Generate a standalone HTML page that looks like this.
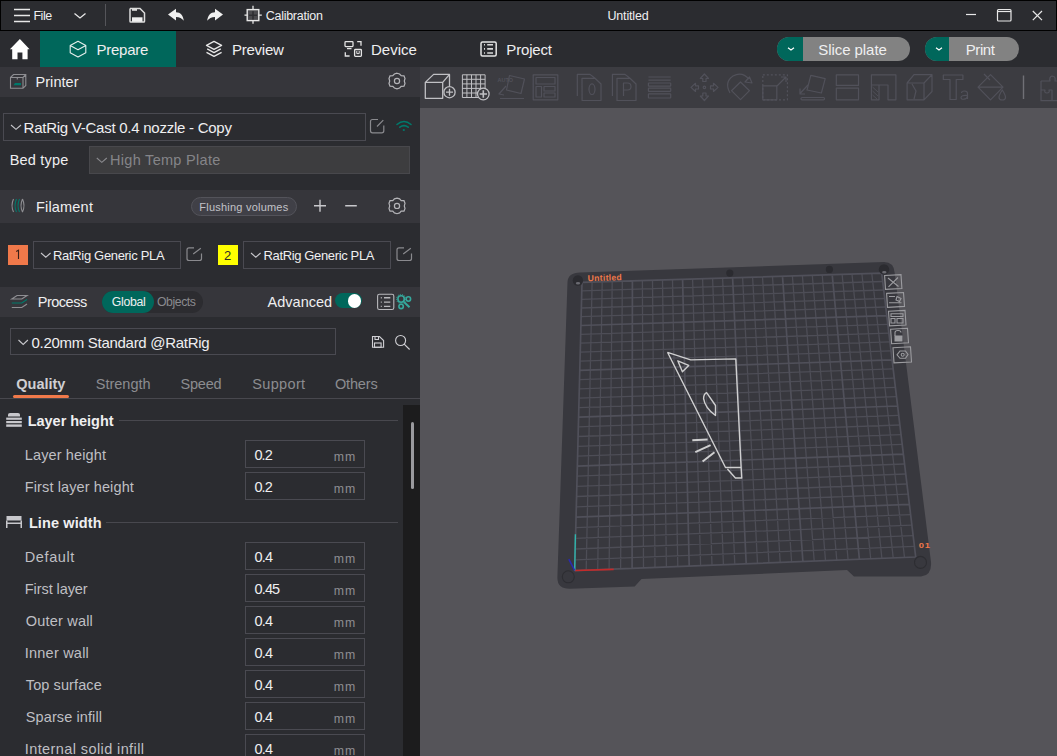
<!DOCTYPE html>
<html><head><meta charset="utf-8">
<style>
*{box-sizing:border-box;margin:0;padding:0}
html,body{width:1057px;height:756px;overflow:hidden;background:#2b2c30;font-family:"Liberation Sans",sans-serif;color:#efeff0}
.a{position:absolute}
.t{position:absolute;white-space:nowrap;line-height:1}
svg{position:absolute;overflow:visible}
</style></head><body>
<!-- title bar -->
<div class="a" style="left:0;top:0;width:1057px;height:31px;background:#2b2c30;border-top:1px solid #000;border-left:1px solid #000;border-right:1px solid #000;border-bottom:1px solid #000"></div>
<svg style="left:0;top:0" width="1057" height="31">
 <g stroke="#e8e8e8" stroke-width="1.6" fill="none">
  <path d="M14 9.5H30M14 15.5H30M14 21.5H30"/>
  <path d="M74.5 13.5L80 18L85.5 13.5" stroke-width="1.3"/>
 </g>
 <path d="M105.5 4V26" stroke="#55555a" stroke-width="1"/>
</svg>
<svg style="left:0;top:0;z-index:1" width="1057" height="67">
 <g fill="none" stroke="#dcdcdc" stroke-width="1.5">
  <path d="M130 8.5H140L144.5 13V21.2Q144.5 22 143.7 22H130.8Q130 22 130 21.2V9.3Q130 8.5 130.8 8.5Z"/>
 </g>
 <rect x="132" y="8" width="5" height="2.8" fill="#dcdcdc"/>
 <rect x="132" y="17.3" width="10.5" height="4.5" fill="#f0f0f0"/>
 <path d="M168 14.6L176 8.8V12.2C180.5 12.2 183.2 15.5 183.8 20.8C182 18.3 179.5 17 176 17V20.4Z" fill="#f0f0f0"/>
 <path d="M223 14.6L215 8.8V12.2C210.5 12.2 207.8 15.5 207.2 20.8C209 18.3 211.5 17 215 17V20.4Z" fill="#f0f0f0"/>
 <rect x="247.2" y="9.6" width="11.6" height="11" fill="#4a4a4e" stroke="#e6e6e6" stroke-width="1.4"/>
 <path d="M249 15.2H257M253 11.2V19.5" stroke="#2e2e32" stroke-width="1.6"/>
 <path d="M244.5 15.2H247.5M258.5 15.2H261.8M253 5.8V9.6M253 20.6V23.8" stroke="#e6e6e6" stroke-width="1.3"/>
 <path d="M19.9 39L9.9 49.2H12.2V59.2H17.5V52.5H22.4V59.2H27.6V49.2H29.6Z" fill="#fff"/>
 <g fill="none" stroke="#e6efed" stroke-width="1.1" stroke-linejoin="round">
  <path d="M78 41.2L70.2 45.5V52.8L78 57L85.8 52.8V45.5Z M70.2 45.5L78 49.7L85.8 45.5"/>
 </g>
 <g fill="none" stroke="#e8e8e8" stroke-width="1.3" stroke-linejoin="round">
  <path d="M214 41.4L206.5 45.4L214 49.3L221.6 45.4Z"/>
  <path d="M207.2 48.9L214 52.6L220.8 48.9"/>
  <path d="M206.5 52.4L214 56.4L221.6 52.4"/>
 </g>
 <g fill="none" stroke="#e4e4e4" stroke-width="1.3">
  <rect x="345" y="41.6" width="8" height="5" rx="0.8"/>
  <path d="M347 48.6H351.5"/>
  <path d="M357.2 41.7H361V45.8"/>
  <path d="M345.3 52.3V56H349.6"/>
  <rect x="354.6" y="49.5" width="6.8" height="6.8" rx="0.8"/>
  <path d="M356.8 51V53.6H359.2V51" stroke-width="1"/>
 </g>
 <g fill="none" stroke="#e4e4e4" stroke-width="1.5">
  <rect x="481" y="41.9" width="15.2" height="14.2" rx="1.5"/>
 </g>
 <path d="M484 44.7H485M487.2 44.7H493M484 48.9H485M487.2 48.9H493M484 53H485M487.2 53H493" stroke="#d8d8d8" stroke-width="1.6"/>
 <g fill="none" stroke="#fff" stroke-width="1.2">
  <path d="M788 47.8L791 50L794 47.8M936 47.8L939 50L942 47.8"/>
 </g>
 <g fill="none" stroke="#e8e8e8" stroke-width="1.2">
  <path d="M966 14.5H976"/>
  <rect x="997.5" y="9.5" width="13.5" height="11.5" rx="1"/>
  <path d="M997.5 11.5H1011"/>
  <path d="M1032.8 11L1042 20.2M1042 11L1032.8 20.2"/>
 </g>
</svg>
<!-- tab bar -->
<div class="a" style="left:0;top:31px;width:1057px;height:36px;background:#2b2c30"></div>
<div class="a" style="left:40px;top:31px;width:136px;height:36px;background:#00675b"></div>
<div class="a" style="left:777px;top:37px;width:133px;height:24px;border-radius:12px;background:#828282;overflow:hidden"><div class="a" style="left:0;top:0;width:26px;height:24px;background:#00675b"></div></div>
<div class="a" style="left:925px;top:37px;width:94px;height:24px;border-radius:12px;background:#828282;overflow:hidden"><div class="a" style="left:0;top:0;width:24px;height:24px;background:#00675b"></div></div>

<!-- left panel -->
<div class="a" style="left:0;top:67px;width:420px;height:30px;background:#36363b"></div>
<div class="a" style="left:3px;top:113px;width:363px;height:28px;border:1px solid #4a4a51"></div>
<div class="a" style="left:89px;top:146px;width:321px;height:28px;background:#3d3d3f;border:1px solid #48484c"></div>

<div class="a" style="left:0;top:190px;width:420px;height:33px;background:#36363b"></div>
<div class="a" style="left:191px;top:197px;width:106px;height:19px;border-radius:10px;background:#404047;border:1px solid #53535a"></div>

<div class="a" style="left:8px;top:245px;width:20px;height:20px;background:#f0794a"></div>
<div class="a" style="left:33px;top:241px;width:148px;height:28px;border:1px solid #4a4a51"></div>
<div class="a" style="left:218px;top:245px;width:20px;height:20px;background:#ffff00"></div>
<div class="a" style="left:243px;top:241px;width:148px;height:28px;border:1px solid #4a4a51"></div>

<div class="a" style="left:0;top:287px;width:420px;height:30px;background:#36363b"></div>
<div class="a" style="left:102px;top:291px;width:101px;height:22px;border-radius:11px;background:#2c2c30"></div>
<div class="a" style="left:102px;top:291px;width:52px;height:22px;border-radius:11px;background:#00675b"></div>
<div class="a" style="left:335px;top:293px;width:27px;height:15px;border-radius:8px;background:#00675b"></div>
<div class="a" style="left:347.5px;top:294px;width:13.5px;height:13.5px;border-radius:7px;background:#fff"></div>

<div class="a" style="left:10px;top:328px;width:326px;height:27px;border:1px solid #4a4a51"></div>
<div class="a" style="left:13px;top:395px;width:56px;height:3px;border-radius:1.5px;background:#f0794a"></div>
<div class="a" style="left:0;top:398px;width:420px;height:1px;background:#48484e"></div>

<div class="a" style="left:403px;top:405px;width:17px;height:351px;background:#1c1c1d"></div>
<div class="a" style="left:410.5px;top:422px;width:3px;height:67px;border-radius:1.5px;background:#9a9a9e"></div>
<div class="a" style="left:119px;top:420px;width:279px;height:1px;background:#48484e"></div>
<div class="a" style="left:106px;top:522px;width:292px;height:1px;background:#48484e"></div>
<div class="a" style="left:245px;top:440px;width:120px;height:28px;border:1px solid #4a4a51"></div>
<div class="a" style="left:245px;top:472px;width:120px;height:28px;border:1px solid #4a4a51"></div>
<div class="a" style="left:245px;top:542px;width:120px;height:28px;border:1px solid #4a4a51"></div>
<div class="a" style="left:245px;top:574px;width:120px;height:28px;border:1px solid #4a4a51"></div>
<div class="a" style="left:245px;top:606px;width:120px;height:28px;border:1px solid #4a4a51"></div>
<div class="a" style="left:245px;top:638px;width:120px;height:28px;border:1px solid #4a4a51"></div>
<div class="a" style="left:245px;top:670px;width:120px;height:28px;border:1px solid #4a4a51"></div>
<div class="a" style="left:245px;top:702px;width:120px;height:28px;border:1px solid #4a4a51"></div>
<div class="a" style="left:245px;top:734px;width:120px;height:28px;border:1px solid #4a4a51"></div>

<svg style="left:0;top:0" width="420" height="756">
 <!-- printer icon -->
 <g fill="none" stroke="#8e8e92" stroke-width="1.1">
  <path d="M10.5 77.5L13.5 74.5H25.8V85.5L23 88.3H10.5Z M10.5 77.5H23V88.3 M23 77.5L25.8 74.5"/>
  <path d="M17.3 77.5V79.5"/>
 </g>
 <path d="M13.5 85.2L15 83H21V85.2Z" fill="#00796b"/>
 <!-- gears -->
 <g fill="none" stroke="#b4b4b8" stroke-width="1.2">
  <path id="gear" d="M397 73.2L399.6 74L401.2 75.7L404 75.8L405 78.5L404.3 81L405 83.5L404 86.2L401.2 86.3L399.6 88L397 88.8L394.4 88L392.8 86.3L390 86.2L389 83.5L389.7 81L389 78.5L390 75.8L392.8 75.7L394.4 74Z"/>
  <circle cx="397" cy="81" r="2.6"/>
  <use href="#gear" y="124.9"/>
  <circle cx="397" cy="205.9" r="2.6"/>
 </g>
 <!-- combo chevrons -->
 <g fill="none" stroke="#c8c8cc" stroke-width="1.1">
  <path d="M11 125L16 129.3L21 125"/>
  <path d="M96.8 158L101.8 162.3L106.8 158" stroke="#8a8a8e"/>
  <path d="M41 253L45.8 257.2L50.6 253"/>
  <path d="M251 253L255.8 257.2L260.6 253"/>
  <path d="M18.5 340L23.2 344.4L27.9 340"/>
 </g>
 <!-- edit icons -->
 <g fill="none" stroke="#8a8a8e" stroke-width="1.2">
  <path d="M378 119.5H372.5Q370.5 119.5 370.5 121.5V130.8Q370.5 132.8 372.5 132.8H381.8Q383.8 132.8 383.8 130.8V125.5M377 126.5L383.3 120.2"/>
  <path d="M194 247.8H189Q187 247.8 187 249.8V258.5Q187 260.5 189 260.5H199.5Q201.5 260.5 201.5 258.5V253.5M193.2 254L200.8 248.3"/>
  <path d="M404 247.8H399Q397 247.8 397 249.8V258.5Q397 260.5 399 260.5H409.5Q411.5 260.5 411.5 258.5V253.5M403.2 254L410.8 248.3"/>
 </g>
 <!-- wifi -->
 <g fill="none" stroke="#00796b" stroke-width="1.6" stroke-linecap="round">
  <path d="M397 124.5Q404 118.5 411 124.5"/>
  <path d="M399.8 127.2Q404 124 408.2 127.2"/>
 </g>
 <circle cx="403.8" cy="130" r="1.1" fill="#00796b"/>
 <!-- filament icon -->
 <g fill="none" stroke-width="1.1">
  <path d="M13.5 199Q10.5 205.5 13.5 212" stroke="#8e8e92"/>
  <path d="M16.5 199Q13.5 205.5 16.5 212" stroke="#00796b"/>
  <path d="M19.5 199Q16.5 205.5 19.5 212" stroke="#00796b"/>
  <path d="M22.5 199Q19.5 205.5 22.5 212M22.5 199Q25.5 205.5 22.5 212" stroke="#8e8e92"/>
 </g>
 <path d="M16.2 251.5L18.5 250.2V259" fill="none" stroke="#3a2018" stroke-width="1.1"/>
 <!-- plus minus -->
 <path d="M314 205.8H326M320 199.8V211.8M345.2 205.8H356.8" stroke="#c8c8cc" stroke-width="1.4"/>
 <!-- process icon -->
 <g fill="none" stroke-width="1.2">
  <path d="M11.8 299L17 295.5H27L21.8 299Z" stroke="#8e8e92"/>
  <path d="M11.8 303H21.8L27 299.5" stroke="#00796b"/>
  <path d="M11.8 307.5H21.8L27 304" stroke="#8e8e92"/>
 </g>
 <!-- list icon -->
 <g fill="none" stroke="#b8b8bc" stroke-width="1.1">
  <rect x="377.6" y="294.3" width="16.2" height="15.2" rx="1.8"/>
 </g>
 <path d="M380.8 297.7H381.8M384 297.7H390.3M380.8 302.1H381.8M384 302.1H390.3M380.8 306.4H381.8M384 306.4H390.3" stroke="#b8b8bc" stroke-width="1.4"/>
 <!-- teal tool icon -->
 <g fill="none" stroke="#35a99d" stroke-width="1.6">
  <circle cx="401.1" cy="299" r="3.2"/>
  <circle cx="408.4" cy="299" r="2.2"/>
  <circle cx="401.1" cy="306.4" r="2.2"/>
  <path d="M404 302L409.5 307.3" stroke-width="2"/>
 </g>
 <g fill="none" stroke="#35a99d" stroke-width="1" stroke-dasharray="1 1.2">
  <circle cx="401.1" cy="299" r="4.6"/>
 </g>
 <!-- save/search -->
 <g fill="none" stroke="#d0d0d4" stroke-width="1.1">
  <path d="M372.5 336.5H379.5L383.6 340.5V347.3H372.5Z"/>
  <rect x="374.5" y="343" width="6.6" height="4.3"/>
  <path d="M375 337V339.5H378.5V337"/>
  <circle cx="400.6" cy="340.5" r="5"/>
  <path d="M404.2 344.1L409.6 349.5"/>
 </g>
 <!-- layer height section icon -->
 <g fill="#c8c8cc">
  <path d="M8 414.5Q8 413 10 413H18Q20 413 20 414.5V416.5H8Z"/>
  <rect x="6.2" y="417.6" width="15.6" height="2.2"/>
  <rect x="6.2" y="421" width="15.6" height="2.2"/>
  <rect x="6.2" y="424.4" width="15.6" height="2.4"/>
 </g>
 <!-- line width icon -->
 <g fill="#c8c8cc">
  <rect x="6.5" y="516" width="15" height="4.5"/>
  <rect x="6.5" y="522.5" width="15" height="1.5"/>
  <rect x="6" y="520.5" width="1.5" height="7.5"/>
  <rect x="20.5" y="520.5" width="1.5" height="7.5"/>
 </g>
</svg>

<!-- canvas -->
<div class="a" style="left:420px;top:67px;width:637px;height:689px;background:#555459"></div>
<div class="a" style="left:420px;top:67px;width:637px;height:41px;background:#3c3c41"></div>
<svg style="left:0;top:0" width="1057" height="756">
 <!-- active toolbar icons -->
 <g fill="none" stroke="#c0c0c4" stroke-width="1.3" stroke-linejoin="round">
  <path d="M425.3 82.4H442.7V98.3H425.3Z M425.3 82.4L433.6 74.4H449.5L442.7 82.4 M449.5 74.4V86.5"/>
  <circle cx="449.5" cy="92.2" r="5.6" fill="#3c3c41"/>
  <path d="M446 92.2H453M449.5 88.7V95.7"/>
  <path d="M462.4 74.8H485.1V97.5H462.4Z M466.9 74.8V97.5M471.5 74.8V97.5M476 74.8V97.5M480.6 74.8V97.5 M462.4 79.3H485.1M462.4 83.9H485.1M462.4 88.4H485.1M462.4 93H485.1" stroke-width="1"/>
  <circle cx="483.3" cy="94" r="5.8" fill="#3c3c41"/>
  <path d="M479.6 94H487M483.3 90.3V97.7" stroke-width="1.6"/>
 </g>
 <!-- dim toolbar icons -->
 <g fill="none" stroke="#51515a" stroke-width="1.2" stroke-linejoin="round">
  <path d="M509.5 75.5L524.5 79L521 93.5L506.5 90Z"/>
  <path d="M500 98.5H524M506 86L499 94L504 95"/>
  <path d="M533.2 74.8H557.8V99.8H533.2Z M536 77.5H555V84H536Z M536 86.5H541.5V97H536Z M544 86.5H555V91H544Z M544 93H555V97H544Z"/>
  <path d="M582 78.3H595L601 84V100.5H582.1Z M577.3 96V74.4H590L595 78.3"/>
  <ellipse cx="592" cy="89.2" rx="3" ry="5.3"/>
  <path d="M617 78.3H630L636 84V100.5H617Z M612.4 96V74.4H625L630 78.3"/>
  <path d="M623.5 96V83H627.5Q631 83 631 86.5Q631 90 627.5 90H623.5"/>
  <path d="M648.4 77H670.7M648.4 80.2H670.7"/>
  <rect x="648.4" y="83" width="22.3" height="3.2" rx="0.5"/>
  <rect x="648.4" y="88.2" width="22.3" height="3.2" rx="0.5"/>
  <rect x="648.4" y="93.8" width="22.3" height="4.2" rx="0.5"/>
  <path d="M704.4 74L708.5 78.5H706V81.5H702.8V78.5H700.3Z M704.4 100.5L708.5 96H706V93H702.8V96H700.3Z M691 87.4L695.5 83.3V85.8H698.5V89H695.5V91.5Z M718 87.4L713.5 83.3V85.8H710.5V89H713.5V91.5Z"/>
  <circle cx="704.4" cy="87.4" r="1.2"/>
  <path d="M730 93Q724 82 733 76Q742 71 749 79"/>
  <path d="M749.5 77L752 83L745 82Z"/>
  <path d="M740.5 82L749.5 90.7L740.5 99.7L731.5 90.7Z"/>
  <path d="M762.8 74.8H787.4V99.8H762.8Z" stroke-dasharray="2 2"/>
  <path d="M762.8 85.9H776.8V99.8H762.8Z M777 86L786 77M781 77H786V82"/>
  <path d="M810.8 75.3L825.2 78.6L821.4 93L807 90Z"/>
  <rect x="801" y="97.5" width="23.5" height="2.3" rx="1"/>
  <path d="M808 85L800.5 93M800 88.5V94H805"/>
  <rect x="836.3" y="74.8" width="22.2" height="10.6"/>
  <rect x="836.3" y="88.1" width="22.2" height="11.7"/>
  <path d="M871.4 74.8H895.9V99.8H888V85H879V99.8H871.4Z M871.4 85H879"/>
  <path d="M872.5 87L878 92M872.5 91L878 96M872.5 95L877 99" stroke-width="0.9"/>
  <path d="M907.1 83H924V99.8H907.1Z M907.1 83L914 74.7H932L924 83 M932 74.7V91.5L924 99.8 M912 84L916 91L914 99"/>
  <path d="M943.3 75H962.9V79.5H956.2V99.5H950V79.5H943.3Z"/>
  <path d="M967.5 99V93.5Q967.5 91 964.5 91Q961.5 91 961.5 93 M967.5 95.5Q961 95 961 97.5Q961 99.5 964 99.2Q967 99 967.5 96"/>
  <path d="M978 87.2L990.5 74.7L1003 87.2L990.5 99.8Z M978 87.2H1003 M984 74L990 80"/>
  <path d="M1002.3 90Q999 95 999 97.5Q999 100 1002.3 100Q1005.5 100 1005.5 97.5Q1005.5 95 1002.3 90Z"/>
  <path d="M1041 81H1050Q1049 77 1052 76Q1056 76 1055 81H1058 M1041 81V100.7H1058 M1041 90H1045Q1044 93 1047 93Q1050 93 1049 90H1052V100.7"/>
 </g>
 <path d="M1023.5 75.5V99" stroke="#707076" stroke-width="1.4"/>
 <text x="497.5" y="82" font-family="Liberation Sans" font-size="5.5" font-weight="bold" fill="#51515a">AUTO</text>

 <!-- plate -->
 <path d="M567.5 282Q568 272.8 580 272.5L884 262Q894 262 894.7 273L931 562Q932 575.5 921 576.5L854 576.6L847 570L641.5 579L634.7 586.5L570 588.7Q557 589 557.4 577Z" fill="#38383e"/>
 <path d="M592.1 282.1L586.2 570.2M602.2 281.8L597.7 569.8M612.2 281.5L609.1 569.3M622.3 281.2L620.6 568.9M642.4 280.5L643.5 567.9M652.5 280.2L655.0 567.5M662.5 279.9L666.4 567.0M672.5 279.6L677.8 566.6M692.6 279.0L700.6 565.6M702.6 278.7L712.0 565.2M712.6 278.4L723.4 564.7M722.6 278.1L734.8 564.3M742.6 277.5L757.5 563.4M752.6 277.2L768.9 562.9M762.5 276.9L780.2 562.4M772.5 276.6L791.6 562.0M792.4 275.9L814.2 561.1M802.4 275.6L825.5 560.6M812.3 275.3L836.8 560.2M822.2 275.0L848.1 559.7M842.1 274.4L870.7 558.8M852.0 274.1L881.9 558.4M861.9 273.8L893.2 557.9M871.8 273.5L904.5 557.5M581.8 290.9L882.7 281.5M581.6 299.4L883.7 290.0M581.4 308.0L884.7 298.5M581.1 316.7L885.8 307.0M580.7 334.3L887.8 324.3M580.5 343.2L888.9 333.1M580.2 352.2L889.9 341.9M580.0 361.2L891.0 350.9M579.5 379.6L893.2 368.9M579.3 388.8L894.3 378.1M579.1 398.2L895.4 387.3M578.8 407.6L896.5 396.6M578.3 426.8L898.7 415.4M578.1 436.5L899.9 425.0M577.9 446.3L901.0 434.6M577.6 456.1L902.2 444.3M577.1 476.1L904.6 464.0M576.8 486.3L905.8 474.0M576.6 496.5L907.0 484.0M576.3 506.8L908.2 494.2M575.8 527.7L910.6 514.7M575.5 538.3L911.9 525.2M575.2 549.0L913.1 535.7M575.0 559.8L914.4 546.3" stroke="#4d4d56" stroke-width="1.3" fill="none"/>
 <path d="M582.0 282.4L574.7 570.7M632.4 280.9L632.1 568.4M682.6 279.3L689.2 566.1M732.6 277.8L746.2 563.8M782.5 276.2L802.9 561.5M832.2 274.7L859.4 559.3M881.7 273.2L915.7 557.0M582.0 282.4L881.7 273.2M580.9 325.5L886.8 315.6M579.8 370.3L892.1 359.9M578.6 417.2L897.6 406.0M577.3 466.1L903.4 454.1M576.1 517.2L909.4 504.4M574.7 570.7L915.7 557.0" stroke="#50505a" stroke-width="1.7" fill="none"/>
 <g fill="#2b2b30">
  <circle cx="577.9" cy="280.5" r="5.2"/>
  <circle cx="884" cy="269.4" r="5.2"/>
  <circle cx="729.8" cy="273.1" r="3.6"/>
  <circle cx="829.4" cy="269.4" r="3.6"/>
 </g>
 <g fill="#6b6b72">
  <ellipse cx="578" cy="283.3" rx="2.2" ry="1.2"/>
  <ellipse cx="884.3" cy="272.2" rx="2.2" ry="1.2"/>
 </g>
 <g fill="none" stroke="#2d2d32" stroke-width="1.1">
  <circle cx="568.3" cy="576.8" r="6"/>
  <circle cx="920.5" cy="562.4" r="6"/>
 </g>
 <text x="587.8" y="281.2" transform="rotate(-1.8 588 281)" font-family="Liberation Sans" font-weight="bold" font-size="8.6" fill="#f0784a" letter-spacing="0.3">Untitled</text>
 <text x="918.8" y="548" font-family="Liberation Sans" font-weight="bold" font-size="7" transform="scale(1.35 1)" transform-origin="918.8 548" fill="#f0784a" letter-spacing="0.6">01</text>
 <!-- axes -->
 <path d="M574.7 570.5L613.7 569.4" stroke="#c42a2a" stroke-width="1.6"/>
 <path d="M574.7 570.5L575.4 534.2" stroke="#2fb5ad" stroke-width="1.4"/>
 <path d="M574.7 570.5L568.8 559.2" stroke="#2a2ab0" stroke-width="1.6"/>
 <!-- object -->
 <g fill="none" stroke="#cfcfd0" stroke-width="1.4" stroke-linejoin="round">
  <path d="M667.5 352.3L690.7 359.9L735.8 358.9L741 465L741.7 478H735.4L727.4 469 M667.5 352.3L725.5 467.5H741"/>
  <path d="M677.8 360.8L688.7 365.4L682.4 371.8Z"/>
  <path d="M706.6 392.6L715.5 405.5L715.5 415.5Q705 408 703.6 398.6Q703.6 394 706.6 392.6Z"/>
  <path d="M692.3 440.3L707.6 439.6M695.3 452.2L710.6 445.2M702.6 461.5L714.5 452.2" stroke-width="2"/>
 </g>
 <!-- plate toolbar icons -->
 <g fill="none" stroke="#9c9ca0" stroke-width="1.1">
  <path d="M884.6 275.5L901 274.6L901.9 288.5L885.5 289.3Z M888 278L898.5 286.5M898 277.5L888.5 286.8"/>
  <path d="M886.6 293.4L903.5 292.5L904.5 306.4L887.5 307.3Z M889 302.8H901.5 M889 296.5H895M897 296.5L901 298.5L899.5 301.5L896 300Z"/>
  <path d="M888.5 311.3L905 310.4L906 325L889.5 325.9Z M891 313.8H903V316.5H891Z M891 318.5H895V323H891Z M897 318.5H903V323H897Z"/>
  <path d="M890.6 329.2L907.5 328.3L908.5 342.8L891.6 343.7Z M895 336V332.5Q895 330.5 898 330.5Q901 330.5 901 332.5"/>
  <path d="M893 347.7L910.5 346.8L911.5 362L894 362.9Z M897 354.8L900 351H905.5L908 354.5L905.5 358.3H900Z"/>
  <circle cx="902.7" cy="354.7" r="1.5"/>
 </g>
 <rect x="894.5" y="335.5" width="8" height="6" fill="#9c9ca0"/>
</svg>
<div class="t" style="left:33.40px;top:10.32px;font-size:12.5px;color:#efeff0;font-weight:400;letter-spacing:-0.463px">File</div>
<div class="t" style="left:265.70px;top:10.22px;font-size:12.5px;color:#efeff0;font-weight:400;letter-spacing:-0.260px">Calibration</div>
<div class="t" style="left:607.40px;top:10.32px;font-size:12.5px;color:#efeff0;font-weight:400;letter-spacing:-0.147px">Untitled</div>
<div class="t" style="left:96.60px;top:42.10px;font-size:15px;color:#efeff0;font-weight:400;letter-spacing:-0.287px">Prepare</div>
<div class="t" style="left:232.00px;top:42.10px;font-size:15px;color:#efeff0;font-weight:400;letter-spacing:-0.253px">Preview</div>
<div class="t" style="left:371.00px;top:42.10px;font-size:15px;color:#efeff0;font-weight:400;letter-spacing:-0.001px">Device</div>
<div class="t" style="left:506.30px;top:42.10px;font-size:15px;color:#efeff0;font-weight:400;letter-spacing:-0.170px">Project</div>
<div class="t" style="left:818.30px;top:42.00px;font-size:15px;color:#efeff0;font-weight:400;letter-spacing:-0.066px">Slice plate</div>
<div class="t" style="left:965.70px;top:42.00px;font-size:15px;color:#efeff0;font-weight:400;letter-spacing:-0.394px">Print</div>
<div class="t" style="left:35.50px;top:74.93px;font-size:14.5px;color:#efeff0;font-weight:400;letter-spacing:0.054px">Printer</div>
<div class="t" style="left:23.60px;top:120.00px;font-size:15px;color:#efeff0;font-weight:400;letter-spacing:-0.254px">RatRig V-Cast 0.4 nozzle - Copy</div>
<div class="t" style="left:9.70px;top:152.73px;font-size:14.5px;color:#efeff0;font-weight:400;letter-spacing:0.204px">Bed type</div>
<div class="t" style="left:110.00px;top:152.73px;font-size:14.5px;color:#858589;font-weight:400;letter-spacing:0.298px">High Temp Plate</div>
<div class="t" style="left:35.90px;top:199.53px;font-size:14.5px;color:#efeff0;font-weight:400;letter-spacing:0.204px">Filament</div>
<div class="t" style="left:199.30px;top:202.19px;font-size:11px;color:#c2c2c8;font-weight:400;letter-spacing:0.220px">Flushing volumes</div>
<div class="t" style="left:224.00px;top:248.80px;font-size:13px;color:#2a2a2a;font-weight:400;letter-spacing:0.000px">2</div>
<div class="t" style="left:53.00px;top:249.30px;font-size:13px;color:#efeff0;font-weight:400;letter-spacing:-0.322px">RatRig Generic PLA</div>
<div class="t" style="left:263.50px;top:249.30px;font-size:13px;color:#efeff0;font-weight:400;letter-spacing:-0.358px">RatRig Generic PLA</div>
<div class="t" style="left:37.80px;top:294.73px;font-size:14.5px;color:#efeff0;font-weight:400;letter-spacing:-0.505px">Process</div>
<div class="t" style="left:111.70px;top:295.99px;font-size:12.3px;color:#efeff0;font-weight:400;letter-spacing:-0.303px">Global</div>
<div class="t" style="left:157.00px;top:295.99px;font-size:12.3px;color:#8a8a8e;font-weight:400;letter-spacing:-0.457px">Objects</div>
<div class="t" style="left:267.60px;top:294.53px;font-size:14.5px;color:#efeff0;font-weight:400;letter-spacing:-0.004px">Advanced</div>
<div class="t" style="left:31.50px;top:334.90px;font-size:15px;color:#efeff0;font-weight:400;letter-spacing:-0.288px">0.20mm Standard @RatRig</div>
<div class="t" style="left:16.30px;top:377.03px;font-size:14.5px;color:#cfcfd3;font-weight:700;letter-spacing:-0.014px">Quality</div>
<div class="t" style="left:95.70px;top:377.03px;font-size:14.5px;color:#8c8c90;font-weight:400;letter-spacing:0.021px">Strength</div>
<div class="t" style="left:180.60px;top:377.03px;font-size:14.5px;color:#8c8c90;font-weight:400;letter-spacing:-0.241px">Speed</div>
<div class="t" style="left:252.30px;top:377.03px;font-size:14.5px;color:#8c8c90;font-weight:400;letter-spacing:0.341px">Support</div>
<div class="t" style="left:335.00px;top:377.03px;font-size:14.5px;color:#8c8c90;font-weight:400;letter-spacing:-0.173px">Others</div>
<div class="t" style="left:27.70px;top:413.53px;font-size:14.5px;color:#efeff0;font-weight:700;letter-spacing:-0.026px">Layer height</div>
<div class="t" style="left:28.90px;top:516.13px;font-size:14.5px;color:#efeff0;font-weight:700;letter-spacing:0.108px">Line width</div>
<div class="t" style="left:24.80px;top:448.33px;font-size:14.5px;color:#bfbfc3;font-weight:400;letter-spacing:0.129px">Layer height</div>
<div class="t" style="left:254.50px;top:448.33px;font-size:14.5px;color:#efeff0;font-weight:400;letter-spacing:-0.946px">0.2</div>
<div class="t" style="left:333.70px;top:450.79px;font-size:12.3px;color:#8e8e92;font-weight:400;letter-spacing:1.057px">mm</div>
<div class="t" style="left:24.80px;top:480.13px;font-size:14.5px;color:#bfbfc3;font-weight:400;letter-spacing:0.109px">First layer height</div>
<div class="t" style="left:254.50px;top:480.13px;font-size:14.5px;color:#efeff0;font-weight:400;letter-spacing:-0.946px">0.2</div>
<div class="t" style="left:333.70px;top:482.59px;font-size:12.3px;color:#8e8e92;font-weight:400;letter-spacing:1.057px">mm</div>
<div class="t" style="left:24.80px;top:550.13px;font-size:14.5px;color:#bfbfc3;font-weight:400;letter-spacing:0.598px">Default</div>
<div class="t" style="left:254.50px;top:550.13px;font-size:14.5px;color:#efeff0;font-weight:400;letter-spacing:-0.796px">0.4</div>
<div class="t" style="left:333.70px;top:552.59px;font-size:12.3px;color:#8e8e92;font-weight:400;letter-spacing:1.057px">mm</div>
<div class="t" style="left:24.80px;top:582.13px;font-size:14.5px;color:#bfbfc3;font-weight:400;letter-spacing:-0.081px">First layer</div>
<div class="t" style="left:254.50px;top:582.13px;font-size:14.5px;color:#efeff0;font-weight:400;letter-spacing:-0.852px">0.45</div>
<div class="t" style="left:333.70px;top:584.59px;font-size:12.3px;color:#8e8e92;font-weight:400;letter-spacing:1.057px">mm</div>
<div class="t" style="left:25.80px;top:614.13px;font-size:14.5px;color:#bfbfc3;font-weight:400;letter-spacing:0.194px">Outer wall</div>
<div class="t" style="left:254.50px;top:614.13px;font-size:14.5px;color:#efeff0;font-weight:400;letter-spacing:-0.796px">0.4</div>
<div class="t" style="left:333.70px;top:616.59px;font-size:12.3px;color:#8e8e92;font-weight:400;letter-spacing:1.057px">mm</div>
<div class="t" style="left:24.80px;top:646.13px;font-size:14.5px;color:#bfbfc3;font-weight:400;letter-spacing:0.218px">Inner wall</div>
<div class="t" style="left:254.50px;top:646.13px;font-size:14.5px;color:#efeff0;font-weight:400;letter-spacing:-0.796px">0.4</div>
<div class="t" style="left:333.70px;top:648.59px;font-size:12.3px;color:#8e8e92;font-weight:400;letter-spacing:1.057px">mm</div>
<div class="t" style="left:25.80px;top:678.13px;font-size:14.5px;color:#bfbfc3;font-weight:400;letter-spacing:0.101px">Top surface</div>
<div class="t" style="left:254.50px;top:678.13px;font-size:14.5px;color:#efeff0;font-weight:400;letter-spacing:-0.796px">0.4</div>
<div class="t" style="left:333.70px;top:680.59px;font-size:12.3px;color:#8e8e92;font-weight:400;letter-spacing:1.057px">mm</div>
<div class="t" style="left:25.80px;top:710.13px;font-size:14.5px;color:#bfbfc3;font-weight:400;letter-spacing:0.098px">Sparse infill</div>
<div class="t" style="left:254.50px;top:710.13px;font-size:14.5px;color:#efeff0;font-weight:400;letter-spacing:-0.796px">0.4</div>
<div class="t" style="left:333.70px;top:712.59px;font-size:12.3px;color:#8e8e92;font-weight:400;letter-spacing:1.057px">mm</div>
<div class="t" style="left:24.80px;top:742.13px;font-size:14.5px;color:#bfbfc3;font-weight:400;letter-spacing:0.400px">Internal solid infill</div>
<div class="t" style="left:254.50px;top:742.13px;font-size:14.5px;color:#efeff0;font-weight:400;letter-spacing:-0.796px">0.4</div>
<div class="t" style="left:333.70px;top:744.59px;font-size:12.3px;color:#8e8e92;font-weight:400;letter-spacing:1.057px">mm</div>
</body></html>
